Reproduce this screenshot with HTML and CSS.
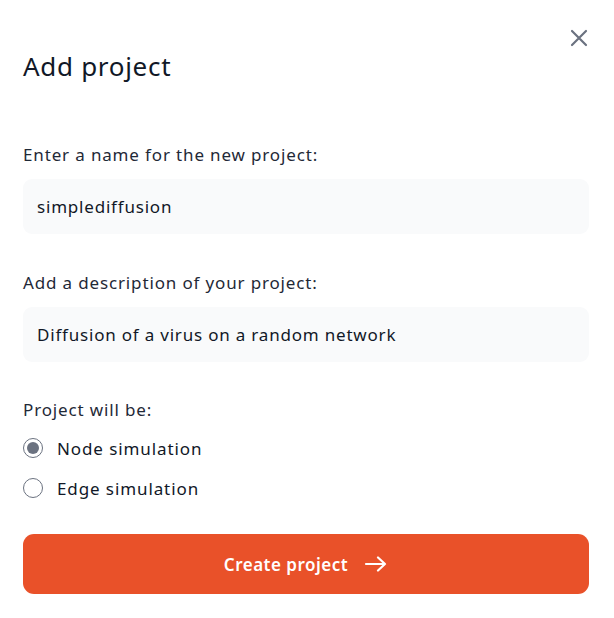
FILE: index.html
```html
<!DOCTYPE html>
<html lang="en">
<head>
<meta charset="utf-8">
<title>Add project</title>
<link rel="stylesheet" href="styles.css">
</head>
<body>
<div class="modal">
  <button class="close" aria-label="Close">
    <svg width="18" height="18" viewBox="0 0 18 18"><path d="M2 2L16 16M16 2L2 16" stroke="#6b7280" stroke-width="2.2" stroke-linecap="round"/></svg>
  </button>
  <h1 class="title">Add project</h1>
  <div class="field first">
    <label class="label">Enter a name for the new project:</label>
    <div class="input">simplediffusion</div>
  </div>
  <div class="field">
    <label class="label">Add a description of your project:</label>
    <div class="input">Diffusion of a virus on a random network</div>
  </div>
  <div class="field kind">
    <div class="label">Project will be:</div>
    <div class="radios">
      <div class="radio-row"><span class="radio checked"></span><span>Node simulation</span></div>
      <div class="radio-row"><span class="radio"></span><span>Edge simulation</span></div>
    </div>
  </div>
  <button class="submit">Create project
    <svg width="24" height="16" viewBox="0 0 24 16"><path d="M2 8H21M14 1.5L21 8L14 14.5" fill="none" stroke="#fff" stroke-width="2.2" stroke-linecap="round" stroke-linejoin="round"/></svg>
  </button>
</div>
</body>
</html>
```

FILE: styles.css
```css
* { box-sizing: border-box; }
html, body { margin: 0; padding: 0; background: #fff; }
body { font-family: "Noto Sans", "Open Sans", sans-serif; color: #111827; }
.modal { position: relative; padding: 46px 25px 0 23px; width: 614px; }
.close { position: absolute; top: 29px; right: 26px; background: none; border: 0; padding: 0; width: 18px; height: 18px; display: flex; }
.title { margin: 0; font-size: 26px; font-weight: 400; line-height: 40px; letter-spacing: 0.7px; color: #111827; }
.field { margin-top: 37px; display: flex; flex-direction: column; }
.field.first { margin-top: 57px; }
.label { font-size: 17px; line-height: 24px; letter-spacing: 0.85px; color: #1f2937; }
.input { margin-top: 12px; height: 55px; background: #f9fafb; border-radius: 9px; padding: 0 14px; display: flex; align-items: center; font-size: 17px; letter-spacing: 0.8px; color: #111827; }
.field.kind { margin-top: 36px; }
.radios { margin-top: 6px; display: flex; flex-direction: column; }
.radio-row { display: flex; align-items: center; gap: 14px; font-size: 17px; letter-spacing: 0.9px; height: 40px; color: #111827; }
.radio { width: 20px; height: 20px; border-radius: 50%; border: 1.5px solid #6b7280; display: inline-flex; align-items: center; justify-content: center; flex: none; }
.radio.checked::after { content: ""; width: 12px; height: 12px; border-radius: 50%; background: #6b7280; }
.submit { margin-top: 26px; width: 566px; height: 60px; border: 0; border-radius: 11px; background: #e95129; color: #fff; font-family: inherit; font-size: 17px; font-weight: 600; letter-spacing: 0.5px; display: flex; align-items: center; justify-content: center; gap: 16px; }
.submit svg { margin-left: 0; }
```
